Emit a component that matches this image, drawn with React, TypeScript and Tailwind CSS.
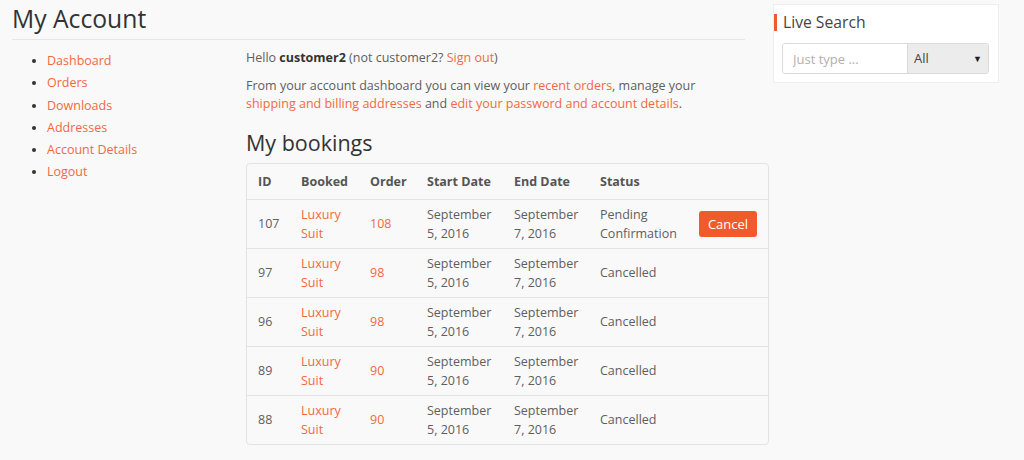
import React from "react";

const link = "text-[#f4683f]";

type Row = { id: string; order: string; status: React.ReactNode; cancel?: boolean };

const rows: Row[] = [
  { id: "107", order: "108", status: <>Pending<br />Confirmation</>, cancel: true },
  { id: "97", order: "98", status: "Cancelled" },
  { id: "96", order: "98", status: "Cancelled" },
  { id: "89", order: "90", status: "Cancelled" },
  { id: "88", order: "90", status: "Cancelled" },
];

export default function App() {
  return (
    <div className="min-h-[460px] w-[1024px] bg-[#f9f9f9] flex font-['Open_Sans',sans-serif] text-[12.5px] text-[#5e5e5e]">
      <div className="w-[773px] pl-[12px] shrink-0">
        <h1 className="w-[733px] text-[24.7px] leading-[37px] text-[#333] border-b border-[#e6e6e6] pb-[2px]">My Account</h1>
        <div className="flex pt-[9px]">
          <nav className="w-[234px] shrink-0 pt-[1px]">
            <ul className="list-disc pl-[35px] marker:text-[#333] leading-[22.3px]">
              <li><a className={link}>Dashboard</a></li>
              <li><a className={link}>Orders</a></li>
              <li><a className={link}>Downloads</a></li>
              <li><a className={link}>Addresses</a></li>
              <li><a className={link}>Account Details</a></li>
              <li><a className={link}>Logout</a></li>
            </ul>
          </nav>
          <main className="w-[523px] shrink-0">
            <p className="leading-[18px] mb-[10px]">
              Hello <b className="font-bold text-[#333]">customer2</b> (not customer2? <a className={link}>Sign out</a>)
            </p>
            <p className="leading-[18px] w-[490px]">
              From your account dashboard you can view your <a className={link}>recent orders</a>, manage your{" "}
              <a className={link}>shipping and billing addresses</a> and{" "}
              <a className={link}>edit your password and account details</a>.
            </p>
            <h2 className="text-[21.5px] leading-[30px] text-[#333] mt-[15px] mb-[5px]">My bookings</h2>
            <div className="border border-[#e3e3e3] rounded-[4px] overflow-hidden">
              <table className="w-full table-fixed border-collapse leading-[19px]">
                <colgroup>
                  <col className="w-[42px]" />
                  <col className="w-[69px]" />
                  <col className="w-[57px]" />
                  <col className="w-[87px]" />
                  <col className="w-[86px]" />
                  <col className="w-[99px]" />
                  <col className="w-[81px]" />
                </colgroup>
                <thead>
                  <tr className="h-[35px] text-left text-[#555]">
                    <th className="pl-[11px] font-bold">ID</th>
                    <th className="pl-[12px] font-bold">Booked</th>
                    <th className="pl-[12px] font-bold">Order</th>
                    <th className="pl-[12px] font-bold whitespace-nowrap">Start Date</th>
                    <th className="pl-[12px] font-bold whitespace-nowrap">End Date</th>
                    <th className="pl-[12px] font-bold">Status</th>
                    <th></th>
                  </tr>
                </thead>
                <tbody>
                  {rows.map((r) => (
                    <tr key={r.id} className="h-[49px] border-t border-[#e3e3e3]">
                      <td className="pl-[11px]">{r.id}</td>
                      <td className="pl-[12px] whitespace-nowrap"><a className={link}>Luxury<br />Suit</a></td>
                      <td className="pl-[12px]"><a className={link}>{r.order}</a></td>
                      <td className="pl-[12px] whitespace-nowrap">September<br />5, 2016</td>
                      <td className="pl-[12px] whitespace-nowrap">September<br />7, 2016</td>
                      <td className="pl-[12px] whitespace-nowrap">{r.status}</td>
                      <td className="pl-[12px]">
                        {r.cancel && (
                          <button className="w-[58px] h-[26px] rounded-[3px] bg-[#f15a2b] text-white text-[13px] leading-[26px] mt-[1px]">Cancel</button>
                        )}
                      </td>
                    </tr>
                  ))}
                </tbody>
              </table>
            </div>
          </main>
        </div>
      </div>
      <aside className="mt-[4px] self-start w-[226px] bg-white border border-[#eeeeee] pb-[8px]">
        <h3 className="mt-[9px] border-l-[3px] border-[#f15a2b] pl-[6px] text-[15.7px] leading-[17px] text-[#444]">Live Search</h3>
        <div className="mt-[12px] ml-[8px] flex w-[207px] h-[31px] border border-[#d9d9d9] rounded-[3px] overflow-hidden">
          <input
            placeholder="Just type ..."
            className="w-[125px] h-full bg-white pl-[10px] text-[13px] outline-none placeholder:text-[#b0b0b0] border-r border-[#d9d9d9]"
          />
          <div className="flex-1 bg-[#ececec] flex items-center justify-between pl-[6px] pr-[6px] text-[13px] text-[#444]">
            <span>All</span>
            <span className="text-[9px] text-[#222]">▼</span>
          </div>
        </div>
      </aside>
    </div>
  );
}
